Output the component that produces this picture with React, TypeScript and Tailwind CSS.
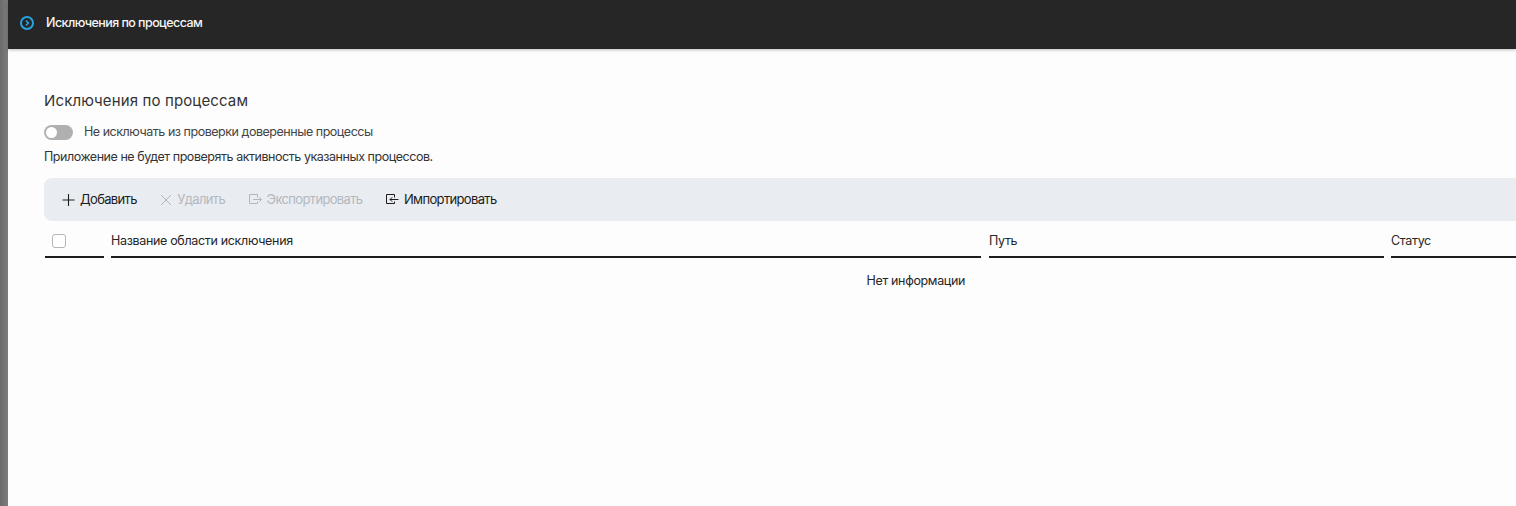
const font = { fontFamily: '"Inter", "Noto Sans", sans-serif' }

const PlusIcon = () => (
  <svg width="13" height="14" viewBox="0 0 13 14" fill="none" stroke="currentColor" strokeWidth="1.1">
    <path d="M6.5 1v12M0.5 7h12" />
  </svg>
)

const CrossIcon = () => (
  <svg width="12" height="14" viewBox="0 0 12 14" fill="none" stroke="currentColor" strokeWidth="1">
    <path d="M1 2l10 10M11 2L1 12" />
  </svg>
)

const ExportIcon = () => (
  <svg width="13" height="14" viewBox="0 0 13 14" fill="none" stroke="currentColor" strokeWidth="1">
    <path d="M8.5 4.5V1.5h-8v9h8V8.5M4 6.5h8.5M10.3 4.3l2.2 2.2-2.2 2.2" />
  </svg>
)

const ImportIcon = () => (
  <svg width="13" height="14" viewBox="0 0 13 14" fill="none" stroke="currentColor" strokeWidth="1">
    <path d="M8.5 4.5V1.5h-8v9h8V8.5M12.5 6.5H4M6.2 4.3L4 6.5l2.2 2.2" />
  </svg>
)

const ToolButton = ({ icon, label, disabled }: { icon: React.ReactNode; label: string; disabled?: boolean }) => (
  <div className={`flex items-center gap-[5px] text-[13px] tracking-[-0.65px] ${disabled ? 'text-[#b3b8bf]' : 'text-[#1d1d1b]'}`}>
    {icon}
    <span>{label}</span>
  </div>
)

const HeadCell = ({ label, className }: { label: string; className: string }) => (
  <div className={`h-[37px] shrink-0 border-b-2 border-[#1d1d1b] pt-[11px] text-[12.5px] leading-[18px] tracking-[-0.33px] text-[#262626] ${className}`}>
    {label}
  </div>
)

export default function App() {
  return (
    <div className="flex h-[506px] w-[1516px] overflow-hidden bg-[#fdfdfd]" style={font}>
      <div className="h-full w-[8px] shrink-0 bg-gradient-to-r from-[#6b6b6b] to-[#7d7d7d]" />

      <div className="flex min-w-0 flex-1 flex-col">
        <header className="flex h-[49px] shrink-0 items-center gap-[12px] bg-[#262626] pb-[3px] pl-[12px] shadow-[0_1px_3px_rgba(0,0,0,0.25)]">
          <svg width="14" height="14" viewBox="0 0 14 14" fill="none">
            <circle cx="7" cy="7" r="6" stroke="#29a3e0" strokeWidth="2" />
            <path d="M6 4.6L8.4 7 6 9.4" stroke="#29a3e0" strokeWidth="1.6" />
          </svg>
          <span className="text-[12.5px] font-medium tracking-[-0.57px] text-[#f5f5f5]">Исключения по процессам</span>
        </header>

        <main className="pl-[36px] pt-[41px]">
          <h1 className="text-[15px] leading-[22px] tracking-[0.13px] text-[#333]">Исключения по процессам</h1>

          <div className="mt-[10px] flex h-[20px] items-center gap-[11px]">
            <div className="flex h-[15px] w-[29px] items-center rounded-full bg-[#b0b0b0] pl-[2px]">
              <div className="h-[11px] w-[11px] rounded-full bg-white" />
            </div>
            <span className="text-[12.5px] tracking-[-0.47px] text-[#444]">Не исключать из проверки доверенные процессы</span>
          </div>

          <p className="mt-[5px] text-[12.5px] leading-[20px] tracking-[-0.46px] text-[#333]">
            Приложение не будет проверять активность указанных процессов.
          </p>

          <div className="mt-[11px] flex h-[43px] items-center gap-[23.5px] rounded-l-[8px] bg-[#e9ecf1] pl-[18px]">
            <ToolButton icon={<PlusIcon />} label="Добавить" />
            <ToolButton icon={<CrossIcon />} label="Удалить" disabled />
            <ToolButton icon={<ExportIcon />} label="Экспортировать" disabled />
            <ToolButton icon={<ImportIcon />} label="Импортировать" />
          </div>

          <div className="flex gap-[7px]">
            <div className="ml-px h-[37px] w-[59px] shrink-0 border-b-2 border-[#1d1d1b] pl-[7px] pt-[13px]">
              <div className="h-[14px] w-[14px] rounded-[3px] border border-[#b5b5b5] bg-white" />
            </div>
            <HeadCell label="Название области исключения" className="mr-px w-[870px]" />
            <HeadCell label="Путь" className="w-[395px]" />
            <HeadCell label="Статус" className="w-[200px]" />
          </div>

          <div className="w-[921px] pt-[14px] text-right text-[12.5px] leading-[18px] tracking-[-0.35px] text-[#262626]">Нет информации</div>
        </main>
      </div>
    </div>
  )
}
